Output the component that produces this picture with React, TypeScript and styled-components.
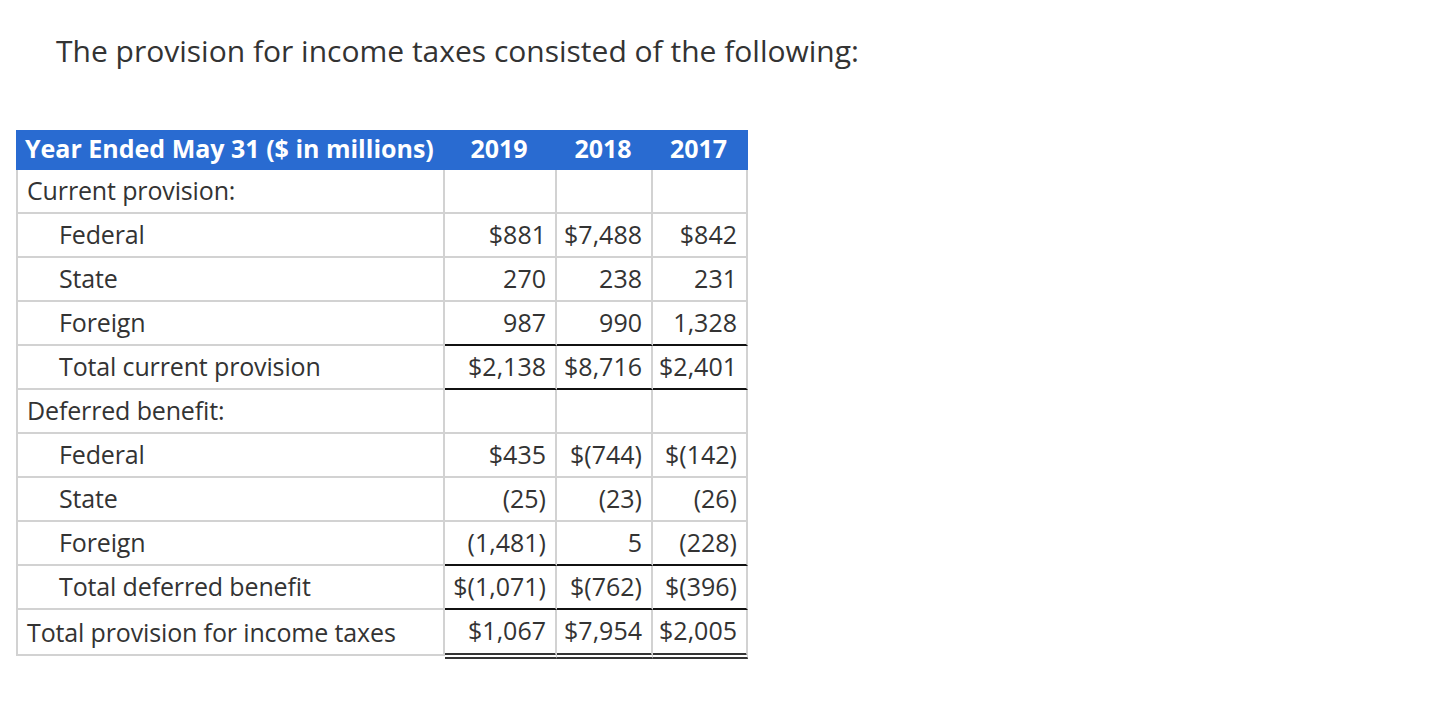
import React from "react";
import styled, { createGlobalStyle, css } from "styled-components";

const Global = createGlobalStyle`
  html, body { margin: 0; padding: 0; background: #ffffff; }
  body { font-family: "Open Sans", "Noto Sans", sans-serif; color: #333333; }
`;

const Page = styled.div`
  padding: 31px 0 0 16px;
`;

const Heading = styled.p`
  margin: 0 0 59px 40px;
  font-size: 30px;
  line-height: 40px;
  color: #333333;
`;

const Table = styled.div`
  display: flex;
  flex-direction: column;
  width: 732px;
`;

const COLS = "429px 112px 96px 95px";

const HeaderRow = styled.div`
  display: grid;
  grid-template-columns: ${COLS};
  height: 40px;
  background: #296bd1;
  align-items: center;
`;

const HeaderCell = styled.div<{ $align: "left" | "center" }>`
  font-weight: 700;
  font-size: 25px;
  line-height: 34px;
  padding-bottom: 4px;
  color: #ffffff;
  text-align: ${(p) => p.$align};
  padding-left: ${(p) => (p.$align === "center" ? "7px" : "9px")};
  padding-right: ${(p) => (p.$align === "center" ? "11px" : "9px")};
  white-space: nowrap;
`;

const Row = styled.div`
  display: grid;
  grid-template-columns: ${COLS};
  align-items: start;
`;

type Rule = "none" | "single" | "double";

const Cell = styled.div<{ $first?: boolean; $indent?: boolean; $num?: boolean; $rule?: Rule; $tall?: boolean }>`
  box-sizing: border-box;
  height: ${(p) => (p.$tall ? "46px" : "44px")};
  display: flex;
  align-items: center;
  justify-content: ${(p) => (p.$num ? "flex-end" : "flex-start")};
  padding: 0 9px ${(p) => (p.$tall ? "1px" : "3px")} ${(p) => (p.$indent ? "41px" : "9px")};
  font-size: 25px;
  letter-spacing: ${(p) => (p.$num ? "0" : "-0.14px")};
  white-space: nowrap;
  border-right: 2px solid #d2d2d2;
  border-bottom: 2px solid #d2d2d2;
  ${(p) => p.$first && css`border-left: 2px solid #d2d2d2;`}
  ${(p) =>
    p.$rule === "single" &&
    css`
      border-bottom: 2px solid #111111;
    `}
  ${(p) =>
    p.$rule === "double" &&
    css`
      height: 49px;
      padding-bottom: 3px;
      border-bottom: 6px double #333333;
    `}
`;

type Line = {
  label: string;
  indent?: boolean;
  values: [string, string, string];
  rule?: Rule;
  tall?: boolean;
};

const lines: Line[] = [
  { label: "Current provision:", values: ["", "", ""] },
  { label: "Federal", indent: true, values: ["$881", "$7,488", "$842"] },
  { label: "State", indent: true, values: ["270", "238", "231"] },
  { label: "Foreign", indent: true, values: ["987", "990", "1,328"], rule: "single" },
  { label: "Total current provision", indent: true, values: ["$2,138", "$8,716", "$2,401"], rule: "single" },
  { label: "Deferred benefit:", values: ["", "", ""] },
  { label: "Federal", indent: true, values: ["$435", "$(744)", "$(142)"] },
  { label: "State", indent: true, values: ["(25)", "(23)", "(26)"] },
  { label: "Foreign", indent: true, values: ["(1,481)", "5", "(228)"], rule: "single" },
  { label: "Total deferred benefit", indent: true, values: ["$(1,071)", "$(762)", "$(396)"], rule: "single" },
  { label: "Total provision for income taxes", values: ["$1,067", "$7,954", "$2,005"], rule: "double", tall: true },
];

export default function App() {
  return (
    <>
      <Global />
      <Page>
        <Heading>The provision for income taxes consisted of the following:</Heading>
        <Table>
          <HeaderRow>
            <HeaderCell $align="left">Year Ended May 31 ($ in millions)</HeaderCell>
            <HeaderCell $align="center">2019</HeaderCell>
            <HeaderCell $align="center">2018</HeaderCell>
            <HeaderCell $align="center">2017</HeaderCell>
          </HeaderRow>
          {lines.map((l, i) => (
            <Row key={i}>
              <Cell $first $indent={l.indent} $tall={l.tall}>
                {l.label}
              </Cell>
              {l.values.map((v, j) => (
                <Cell key={j} $num $rule={l.rule} $tall={l.tall}>
                  {v}
                </Cell>
              ))}
            </Row>
          ))}
        </Table>
      </Page>
    </>
  );
}
